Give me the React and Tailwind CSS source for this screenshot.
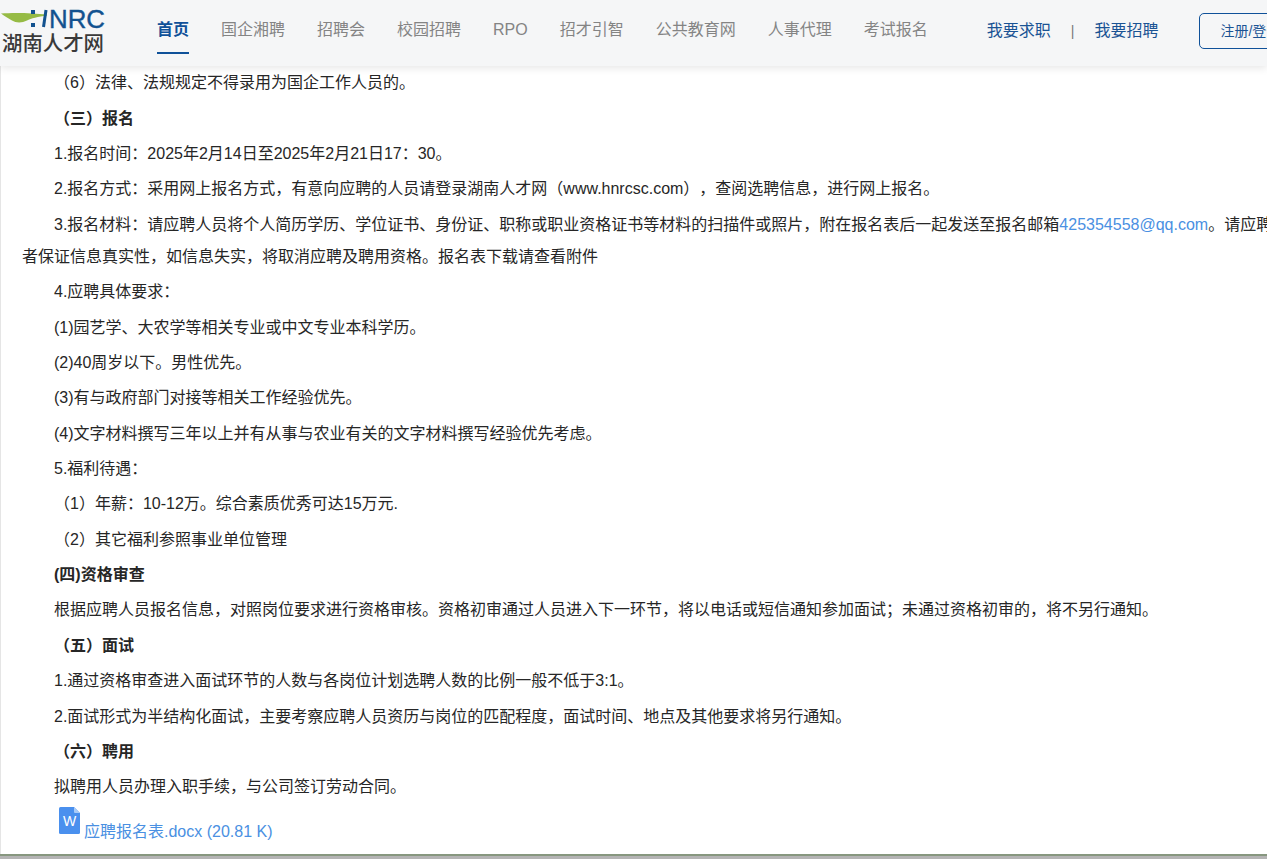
const nav = ["国企湘聘","招聘会","校园招聘","RPO","招才引智","公共教育网","人事代理","考试报名"];
function P({children, bold}) {
  return <p className={"mb-[3.37px] leading-8 indent-8 " + (bold ? "font-bold" : "")}>{children}</p>;
}
function Logo() {
  return (
    <div className="w-[106px] shrink-0 h-[55px]">
      <svg width="106" height="32" viewBox="0 0 106 32" className="block">
        <path d="M1 13.5 C14 12.5 32 13 47 14.5 L47 15.5 C38 17 31 18 27 20.5 C22 23 16 23 12 20.5 C8 18 4 16 1 13.5Z" fill="#96bb45" />
        <rect x="31" y="10" width="4" height="4" fill="#12528f" />
        <rect x="31" y="23" width="4" height="4" fill="#12528f" />
        <path d="M46 10 L43.5 27" stroke="#12528f" strokeWidth="3" fill="none"/>
        <text x="49" y="27.5" fontSize="26" fill="#12528f" stroke="#12528f" strokeWidth="0.4" fontFamily="'Liberation Sans'" textLength="56" lengthAdjust="spacingAndGlyphs">NRC</text>
      </svg>
      <div className="text-[20.4px] leading-[24px] font-medium text-[#3a3a3a] pl-[2px] whitespace-nowrap">湖南人才网</div>
    </div>
  );
}
export default function App() {
  return (
    <div className="h-[859px] w-[1267px] overflow-hidden bg-white flex flex-col font-['Liberation_Sans','Noto_Sans_CJK_SC',sans-serif] text-[16px] text-[#262626] [text-spacing-trim:space-all]">
      <header className="h-[66px] shrink-0 bg-[#f5f6f7] shadow-[0_2px_8px_rgba(0,0,0,0.1)] relative z-10 flex items-start overflow-hidden">
        <Logo />
        <nav className="flex ml-[51px] gap-8 whitespace-nowrap shrink-0">
          <a className="h-[54px] leading-[60px] font-bold text-[#0f5199] border-b-2 border-[#0f5199]">首页</a>
          {nav.map(n => <a key={n} className="h-[54px] leading-[60px] text-[#848484]">{n}</a>)}
        </nav>
        <div className="flex items-center ml-[59px] h-[62px] text-[#1a5394] whitespace-nowrap shrink-0">
          <a>我要求职</a>
          <span className="mx-[20px] text-[#777] text-[14px]">|</span>
          <a>我要招聘</a>
          <a className="ml-[41px] w-[90px] h-[36px] shrink-0 border border-[#0f5199] rounded-[5px] text-[14px] leading-[34px] pl-[20px]">注册/登录</a>
        </div>
      </header>
      <main className="flex-1 overflow-hidden border-l border-[#e5e5e5] pl-[21px] w-[1310px]">
        <div className="w-[1258px] pt-[1.4px]">
          <P>（6）法律、法规规定不得录用为国企工作人员的。</P>
          <P bold>（三）报名</P>
          <P>1.报名时间：2025年2月14日至2025年2月21日17：30。</P>
          <P>2.报名方式：采用网上报名方式，有意向应聘的人员请登录湖南人才网（www.hnrcsc.com），查阅选聘信息，进行网上报名。</P>
          <P>3.报名材料：请应聘人员将个人简历学历、学位证书、身份证、职称或职业资格证书等材料的扫描件或照片，附在报名表后一起发送至报名邮箱<a className="text-[#4a90e2]">425354558@qq.com</a>。请应聘者保证信息真实性，如信息失实，将取消应聘及聘用资格。报名表下载请查看附件</P>
          <P>4.应聘具体要求：</P>
          <P>(1)园艺学、大农学等相关专业或中文专业本科学历。</P>
          <P>(2)40周岁以下。男性优先。</P>
          <P>(3)有与政府部门对接等相关工作经验优先。</P>
          <P>(4)文字材料撰写三年以上并有从事与农业有关的文字材料撰写经验优先考虑。</P>
          <P>5.福利待遇：</P>
          <P>（1）年薪：10-12万。综合素质优秀可达15万元.</P>
          <P>（2）其它福利参照事业单位管理</P>
          <P bold>(四)资格审查</P>
          <P>根据应聘人员报名信息，对照岗位要求进行资格审核。资格初审通过人员进入下一环节，将以电话或短信通知参加面试；未通过资格初审的，将不另行通知。</P>
          <P bold>（五）面试</P>
          <P>1.通过资格审查进入面试环节的人数与各岗位计划选聘人数的比例一般不低于3:1。</P>
          <P>2.面试形式为半结构化面试，主要考察应聘人员资历与岗位的匹配程度，面试时间、地点及其他要求将另行通知。</P>
          <P bold>（六）聘用</P>
          <P>拟聘用人员办理入职手续，与公司签订劳动合同。</P>
          <div className="flex items-start pl-[37px] mt-[4px]">
            <svg width="21" height="27" viewBox="0 0 21 27" className="shrink-0">
              <path d="M1.5 0 H15 L21 6 V25.5 Q21 27 19.5 27 H1.5 Q0 27 0 25.5 V1.5 Q0 0 1.5 0Z" fill="#4a90ee" />
              <path d="M15 0 L21 6 H16 Q15 6 15 5Z" fill="#a9cbf7" />
              <text x="10.5" y="19" fontSize="14" fill="#fff" textAnchor="middle" fontFamily="'Liberation Sans'">W</text>
            </svg>
            <a className="ml-[4px] mt-[9px] text-[#4a90e2] leading-8 whitespace-nowrap">应聘报名表.docx (20.81 K)</a>
          </div>
        </div>
      </main>
      <div className="h-[5px] shrink-0 bg-[#b4b4b4] border-t-2 border-[#87977f]"></div>
    </div>
  );
}
